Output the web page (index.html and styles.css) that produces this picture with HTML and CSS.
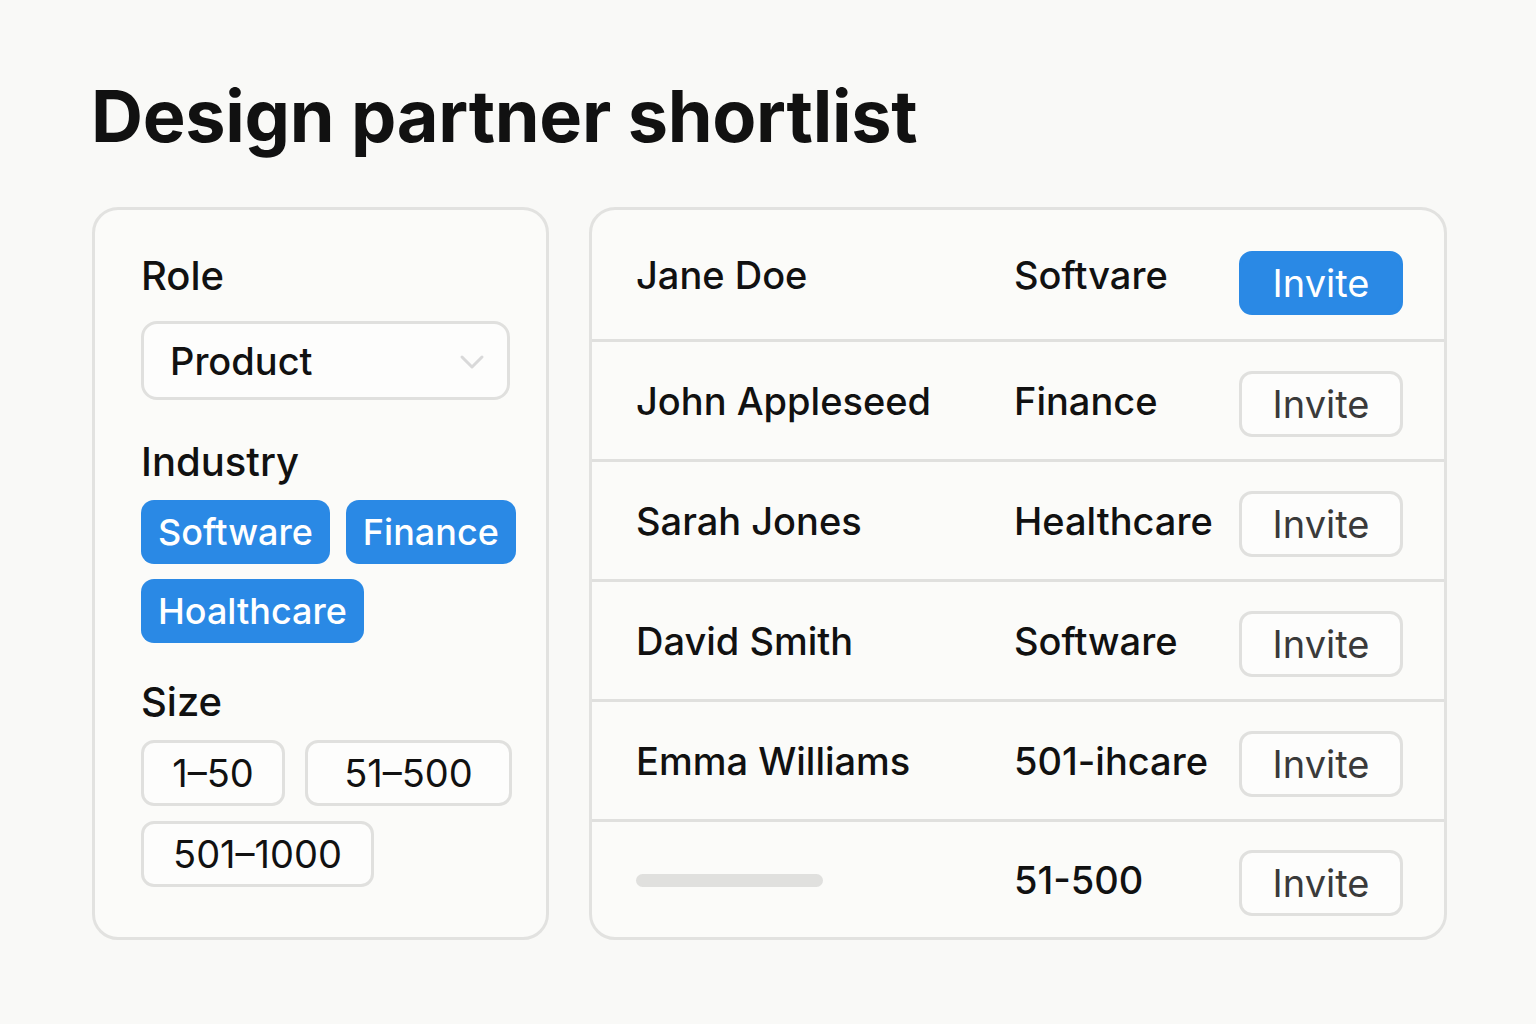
FILE: index.html
```html
<!DOCTYPE html>
<html lang="en">
<head>
<meta charset="utf-8">
<title>Design partner shortlist</title>
<link rel="stylesheet" href="styles.css">
</head>
<body>
<main class="page">
  <h1 class="title">Design partner shortlist</h1>
  <div class="cards">
    <section class="card filters">
      <div class="group role">
        <h2 class="label">Role</h2>
        <div class="select">
          <span>Product</span>
          <svg class="chev" width="26" height="18" viewBox="0 0 26 18"><path d="M3 4 L13 14 L23 4" fill="none" stroke="#d9d9d9" stroke-width="3" stroke-linecap="round" stroke-linejoin="round"/></svg>
        </div>
      </div>
      <div class="group">
        <h2 class="label">Industry</h2>
        <div class="chips">
          <span class="chip on">Software</span>
          <span class="chip on">Finance</span>
          <span class="chip on">Hoalthcare</span>
        </div>
      </div>
      <div class="group">
        <h2 class="label">Size</h2>
        <div class="chips">
          <span class="chip off w1">1–50</span>
          <span class="chip off w2">51–500</span>
          <span class="chip off w3">501–1000</span>
        </div>
      </div>
    </section>
    <section class="card list">
      <div class="row first">
        <span class="name">Jane Doe</span>
        <span class="ind">Softvare</span>
        <button class="btn primary">Invite</button>
      </div>
      <div class="row">
        <span class="name">John Appleseed</span>
        <span class="ind">Finance</span>
        <button class="btn">Invite</button>
      </div>
      <div class="row">
        <span class="name">Sarah Jones</span>
        <span class="ind">Healthcare</span>
        <button class="btn">Invite</button>
      </div>
      <div class="row">
        <span class="name">David Smith</span>
        <span class="ind">Software</span>
        <button class="btn">Invite</button>
      </div>
      <div class="row">
        <span class="name">Emma Williams</span>
        <span class="ind">501-ihcare</span>
        <button class="btn">Invite</button>
      </div>
      <div class="row last">
        <span class="name"><span class="bar"></span></span>
        <span class="ind">51-500</span>
        <button class="btn">Invite</button>
      </div>
    </section>
  </div>
</main>
</body>
</html>
```
FILE: styles.css
```css
* { box-sizing: border-box; }
html, body { margin: 0; padding: 0; }
body {
  background: #f9f9f7;
  font-family: Inter, "Noto Sans", "Liberation Sans", sans-serif;
  color: #111;
  width: 1536px;
  height: 1024px;
  overflow: hidden;
}
.page {
  padding: 71px 89px 0 92px;
}
.title {
  margin: 0 0 0 -1px;
  font-size: 72px;
  line-height: 90px;
  font-weight: 700;
  letter-spacing: -0.3px;
  color: #111;
}
.cards {
  display: flex;
  gap: 40px;
  margin-top: 46px;
}
.card {
  background: #fbfbf9;
  border: 3px solid #e2e2e0;
  border-radius: 26px;
  height: 733px;
}
.filters {
  width: 457px;
  padding: 44px 18px 0 46px;
}
.list {
  width: 858px;
  display: flex;
  flex-direction: column;
}
.group { margin-bottom: 37px; }
.group.role { margin-bottom: 40px; }
.label {
  margin: 0 0 16px;
  font-size: 40px;
  line-height: 44px;
  font-weight: 500;
  color: #111;
}
.role .label { margin-bottom: 23px; }
.select {
  display: flex;
  align-items: center;
  justify-content: space-between;
  height: 79px;
  width: 369px;
  border: 3px solid #e0e0de;
  border-radius: 16px;
  padding: 0 22px 0 26px;
  font-size: 38px;
  font-weight: 500;
  background: #fdfdfc;
}
.chev { margin-top: 2px; }
.chips {
  display: flex;
  flex-wrap: wrap;
  gap: 15px 16px;
}
.chip {
  display: inline-flex;
  align-items: center;
  justify-content: center;
  height: 64px;
  border-radius: 13px;
  font-size: 36px;
  font-weight: 500;
}
.chip.on {
  background: #2a89e5;
  color: #fff;
  padding: 0 17px;
}
.chip.off {
  border: 3px solid #e0e0de;
  background: #fdfdfc;
  color: #111;
  height: 66px;
  font-size: 38px;
  font-weight: 400;
}
.chip.w1 { width: 144px; }
.chip.w2 { width: 207px; margin-left: 4px; }
.chip.w3 { width: 233px; }
.row {
  display: grid;
  grid-template-columns: 378px 1fr 164px;
  align-items: center;
  padding: 0 41px 0 44px;
  border-bottom: 3px solid #e0e0de;
  height: 120px;
  font-size: 38px;
  font-weight: 500;
  color: #111;
}
.row.first { height: 132px; }
.row.last { border-bottom: 0; flex: 1; }
.name, .ind { line-height: 44px; }
.bar {
  display: block;
  width: 187px;
  height: 13px;
  border-radius: 7px;
  background: #e0e0de;
  margin-top: 2px;
}
.btn {
  font-family: inherit;
  height: 66px;
  border: 3px solid #e0e0de;
  border-radius: 13px;
  background: #fdfdfc;
  color: #3a3a3a;
  font-size: 38px;
  font-weight: 400;
  padding: 0;
  margin-top: 6px;
}
.btn.primary {
  background: #2a89e5;
  border-color: #2a89e5;
  color: #fff;
  height: 64px;
  margin-top: 16px;
}
```
